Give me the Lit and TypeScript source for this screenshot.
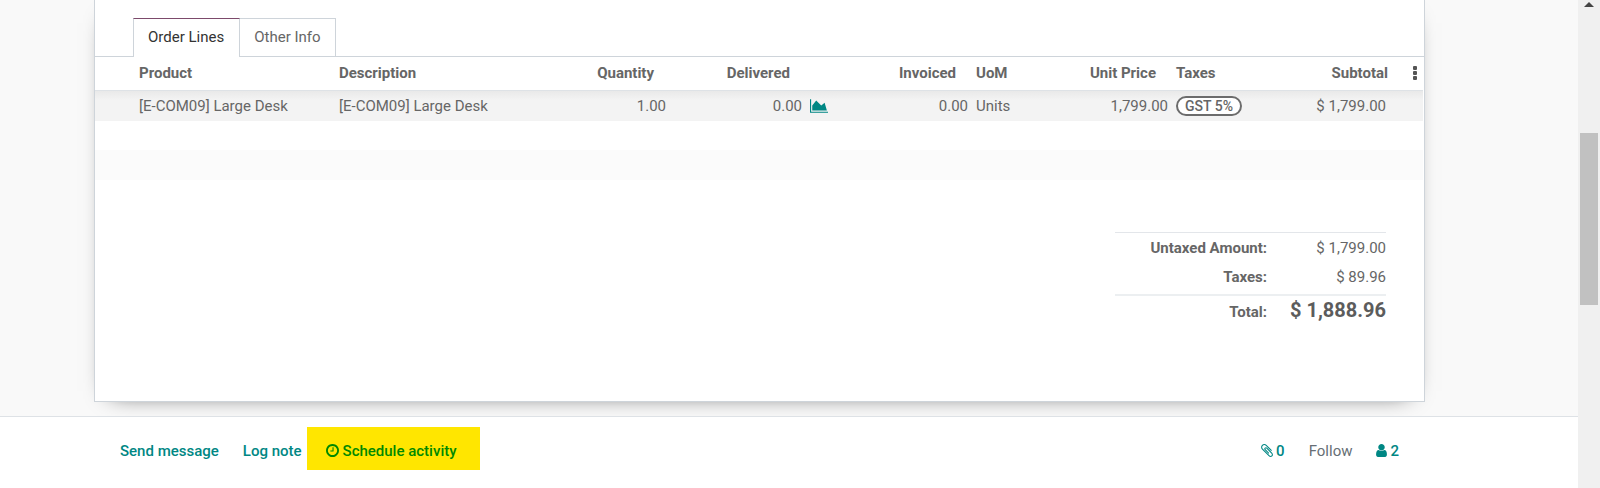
import { LitElement, html, css, svg } from "lit";
import { customElement } from "lit/decorators.js";

const icon = (viewBox: string, path: string, cls: string) =>
  html`<svg class="icon ${cls}" viewBox=${viewBox} aria-hidden="true">${svg`<path d=${path} />`}</svg>`;

const CHART =
  "M2048 1536v128h-2048v-1536h128v1408h1920zm-384-1024l256 896h-1664v-576l448-576 576 576z";
const CLOCK =
  "M1024 544v448q0 14-9 23t-23 9h-320q-14 0-23-9t-9-23v-64q0-14 9-23t23-9h224v-352q0-14 9-23t23-9h64q14 0 23 9t9 23zm416 352q0-148-73-273t-198-198-273-73-273 73-198 198-73 273 73 273 198 198 273 73 273-73 198-198 73-273zm224 0q0 209-103 385.5t-279.5 279.5-385.5 103-385.5-103-279.5-279.5-103-385.5 103-385.5 279.5-279.5 385.5-103 385.5 103 279.5 279.5 103 385.5z";
const CLIP =
  "M1596 1385q0 117-79 196t-196 79q-135 0-235-100l-777-776q-113-115-113-271 0-159 110-270t269-111q158 0 273 113l605 606q10 10 10 22 0 16-30.5 46.5t-46.5 30.5q-13 0-23-10l-606-607q-79-77-181-77-106 0-179 75t-73 181q0 105 76 181l776 777q63 63 145 63 64 0 106-42t42-106q0-82-63-145l-581-581q-26-24-60-24-29 0-48 19t-19 48q0 32 25 59l410 410q10 10 10 22 0 16-31 47t-47 31q-12 0-22-10l-410-410q-63-61-63-149 0-82 57-139t139-57q88 0 149 63l581 581q100 98 100 235z";
const USER =
  "M1536 1399q0 109-62.5 187t-150.5 78h-854q-88 0-150.5-78t-62.5-187q0-85 8.5-160.5t31.5-152 58.5-131 94-89 134.5-34.5q131 128 313 128t313-128q76 0 134.5 34.5t94 89 58.5 131 31.5 152 8.5 160.5zm-256-887q0 159-112.5 271.5t-271.5 112.5-271.5-112.5-112.5-271.5 112.5-271.5 271.5-112.5 271.5 112.5 112.5 271.5z";

@customElement("order-lines")
export class OrderLines extends LitElement {
  static styles = css`
    :host {
      display: block;
      padding-right: 1px;
    }
    .lines {
      width: 100%;
      table-layout: fixed;
      border-collapse: separate;
      border-spacing: 0;
    }
    .product { width: 240px; }
    .quantity { width: 90px; }
    .delivered { width: 136px; }
    .forecast { width: 28px; }
    .invoiced { width: 138px; }
    .uom { width: 68px; }
    .price { width: 132px; }
    .taxes { width: 88px; }
    .subtotal { width: 130px; }
    .options { width: 33px; }
    th, td {
      box-sizing: border-box;
      padding: 0 4px 1px;
      text-align: left;
      white-space: nowrap;
    }
    th {
      height: 34px;
      font-weight: 700;
      color: #666;
      border-bottom: 1px solid #dee2e6;
    }
    td {
      height: 30px;
      color: #666;
    }
    th:first-child, td:first-child {
      padding-left: 44px;
    }
    .num { text-align: right; }
    th.num { padding-right: 16px; }
    th.last { padding-right: 2px; }
    .line td {
      background: linear-gradient(#e9e9e9, #f3f3f3 9px);
    }
    .blank td { height: 29px; }
    .stripe td { height: 30px; background: #fbfbfb; }
    .tag {
      display: block;
      width: max-content;
      box-sizing: border-box;
      height: 20px;
      padding: 0 7px;
      border: 2px solid #6c6c6c;
      border-radius: 10px;
      background: #fff;
      font-size: 14px;
      line-height: 16px;
      font-weight: 500;
    }
    td.tags { padding-bottom: 0; }
    .iconbtn {
      display: flex;
      align-items: center;
      padding: 0;
      border: 0;
      background: none;
      color: #008784;
      cursor: pointer;
    }
    .icon { display: block; fill: currentColor; }
    .chart { width: 18px; height: 14px; }
    .dots { width: 4px; height: 14px; color: #555; }
    th.opt { padding-left: 23px; }
  `;

  render() {
    return html`
      <table class="lines">
        <colgroup>
          <col class="product" /><col /><col class="quantity" /><col class="delivered" />
          <col class="forecast" /><col class="invoiced" /><col class="uom" /><col class="price" />
          <col class="taxes" /><col class="subtotal" /><col class="options" />
        </colgroup>
        <thead>
          <tr>
            <th>Product</th>
            <th>Description</th>
            <th class="num">Quantity</th>
            <th class="num">Delivered</th>
            <th></th>
            <th class="num">Invoiced</th>
            <th>UoM</th>
            <th class="num">Unit Price</th>
            <th>Taxes</th>
            <th class="num last">Subtotal</th>
            <th class="opt">
              <button class="iconbtn" aria-label="Optional columns">
                ${icon("0 0 4 14", "M1 0h2q1 0 1 1v2q0 1-1 1h-2q-1 0-1-1v-2q0-1 1-1zM1 5h2q1 0 1 1v2q0 1-1 1h-2q-1 0-1-1v-2q0-1 1-1zM1 10h2q1 0 1 1v2q0 1-1 1h-2q-1 0-1-1v-2q0-1 1-1z", "dots")}
              </button>
            </th>
          </tr>
        </thead>
        <tbody>
          <tr class="line">
            <td>[E-COM09] Large Desk</td>
            <td>[E-COM09] Large Desk</td>
            <td class="num">1.00</td>
            <td class="num">0.00</td>
            <td>
              <button class="iconbtn" aria-label="Forecast">${icon("0 128 2048 1536", CHART, "chart")}</button>
            </td>
            <td class="num">0.00</td>
            <td>Units</td>
            <td class="num">1,799.00</td>
            <td class="tags"><span class="tag">GST 5%</span></td>
            <td class="num">$ 1,799.00</td>
            <td></td>
          </tr>
          <tr class="blank"><td colspan="11"></td></tr>
          <tr class="blank stripe"><td colspan="11"></td></tr>
        </tbody>
      </table>
    `;
  }
}

@customElement("order-totals")
export class OrderTotals extends LitElement {
  static styles = css`
    :host { display: block; }
    .totals {
      width: 271px;
      margin: 0 0 0 auto;
      display: grid;
      grid-template-columns: 152px 1fr;
      text-align: right;
      color: #666;
      border-top: 1px solid #e3e6ea;
      padding-top: 1px;
    }
    dt, dd { margin: 0; line-height: 29px; }
    dt { font-weight: 700; color: #666; }
    .sum {
      margin-top: 2px;
      border-top: 2px solid #eceff1;
      line-height: 32px;
    }
    dd.sum {
      font-size: 20px;
      line-height: 28px;
      font-weight: 700;
      color: #5c5c5c;
    }
  `;

  render() {
    return html`
      <dl class="totals">
        <dt>Untaxed Amount:</dt><dd>$ 1,799.00</dd>
        <dt>Taxes:</dt><dd>$ 89.96</dd>
        <dt class="sum">Total:</dt><dd class="sum">$ 1,888.96</dd>
      </dl>
    `;
  }
}

@customElement("chatter-bar")
export class ChatterBar extends LitElement {
  static styles = css`
    :host {
      display: flex;
      align-items: center;
      padding: 10px 179px 18px 120px;
      border-top: 1px solid #dee2e6;
      background: #fff;
    }
    button {
      display: flex;
      align-items: center;
      gap: 4px;
      padding: 0;
      border: 0;
      background: none;
      font: inherit;
      font-weight: 500;
      color: #008784;
      white-space: nowrap;
      cursor: pointer;
    }
    .note { margin-left: 24px; }
    .activity {
      height: 43px;
      margin-left: 5px;
      padding: 4px 23px 0 19px;
      background: #ffe600;
      color: #008900;
    }
    .send, .note, .side { padding-top: 4px; }
    .side { display: flex; gap: 24px; margin-left: auto; }
    .side button { gap: 3px; }
    .side .follow { font-weight: 400; color: #666e75; }
    .icon { display: block; fill: currentColor; }
    .clock { width: 13px; height: 13px; }
    .clip { width: 12px; height: 13px; }
    .user { width: 11px; height: 13px; }
  `;

  render() {
    return html`
      <button class="send">Send message</button>
      <button class="note">Log note</button>
      <button class="activity">${icon("128 128 1536 1536", CLOCK, "clock")}Schedule activity</button>
      <div class="side">
        <button aria-label="0 attachments">${icon("190 128 1410 1536", CLIP, "clip")}0</button>
        <button class="follow">Follow</button>
        <button aria-label="2 followers">${icon("256 128 1280 1536", USER, "user")}2</button>
      </div>
    `;
  }
}

@customElement("app-root")
export class AppRoot extends LitElement {
  static styles = css`
    :host {
      display: grid;
      grid-template-columns: 1fr 22px;
      min-height: 100vh;
      background: #f9f9f9;
      font: 15px/20px Roboto, "Liberation Sans", sans-serif;
      color: #666;
    }
    .page {
      display: flex;
      flex-direction: column;
      min-width: 0;
    }
    .sheet {
      margin: 0 153px 14px 94px;
      padding: 18px 0 73px;
      border: 1px solid #ced4da;
      border-top: 0;
      background: #fff;
      box-shadow: 0 6px 23px -17px #000;
    }
    .tabs {
      display: flex;
      padding-left: 38px;
      border-bottom: 1px solid #ced4da;
    }
    .tab {
      height: 38px;
      padding: 0 14px 1px;
      border: 1px solid #ced4da;
      border-width: 1px 1px 0 0;
      background: #fff;
      font: inherit;
      color: #666;
      cursor: pointer;
    }
    .tab.active {
      height: 39px;
      margin-bottom: -1px;
      padding: 0 15px 2px 14px;
      border-left-width: 1px;
      border-top-color: #7c4a6b;
      color: #333;
    }
    .totals {
      display: block;
      margin-top: 52px;
      padding-right: 38px;
    }
    .chatter { flex: 1; }
    .scroll {
      display: flex;
      flex-direction: column;
      align-items: center;
      background: #f0f0f0;
    }
    .up {
      width: 10px;
      height: 5px;
      margin-top: 2px;
      fill: #444;
    }
    .thumb {
      width: 18px;
      height: 172px;
      margin-top: 126px;
      background: #c1c1c1;
    }
  `;

  render() {
    return html`
      <main class="page">
        <section class="sheet">
          <div class="tabs" role="tablist">
            <button class="tab active" role="tab" aria-selected="true">Order Lines</button>
            <button class="tab" role="tab" aria-selected="false">Other Info</button>
          </div>
          <order-lines></order-lines>
          <order-totals class="totals"></order-totals>
        </section>
        <chatter-bar class="chatter"></chatter-bar>
      </main>
      <div class="scroll" aria-hidden="true">
        <svg class="up" viewBox="0 0 10 5"><path d="M5 0l5 5h-10z" /></svg>
        <div class="thumb"></div>
      </div>
    `;
  }
}
